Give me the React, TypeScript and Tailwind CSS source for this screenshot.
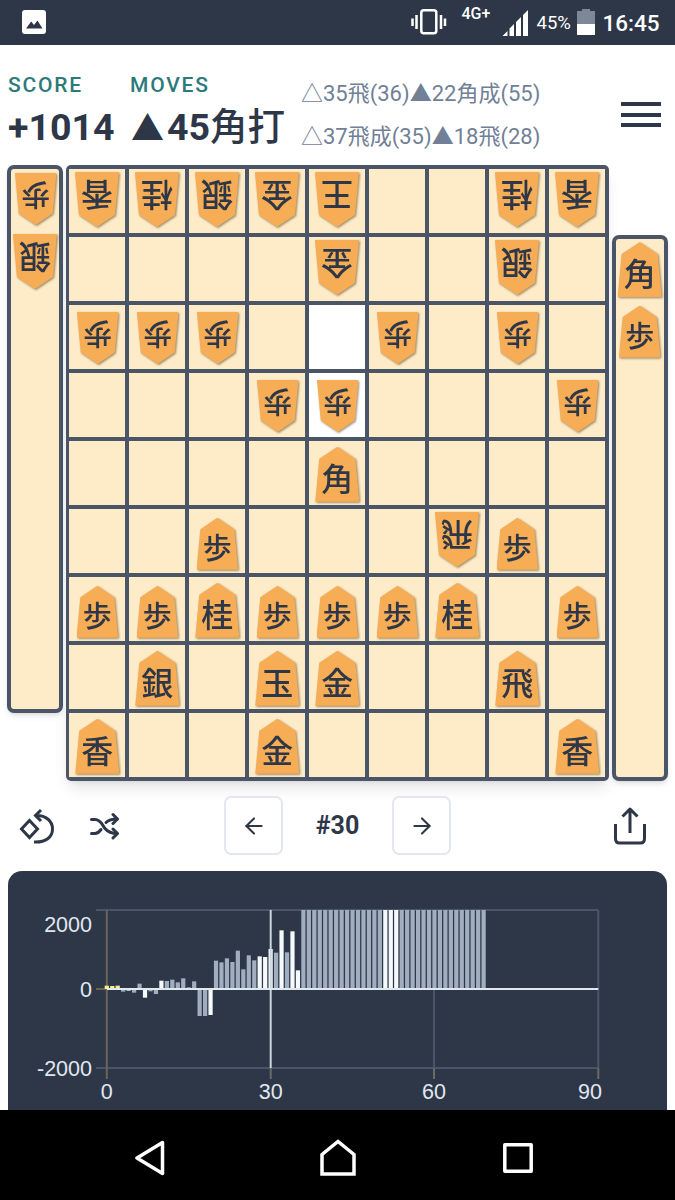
import React from "react";
import { ArrowLeft, ArrowRight } from "lucide-react";

type P = string;
const rows: P[][] = [
  ["香r", "桂r", "銀r", "金r", "王r", "", "", "桂r", "香r"],
  ["", "", "", "", "金r", "", "", "銀r", ""],
  ["歩r", "歩r", "歩r", "", "", "歩r", "", "歩r", ""],
  ["", "", "", "歩r", "歩r", "", "", "", "歩r"],
  ["", "", "", "", "角", "", "", "", ""],
  ["", "", "歩", "", "", "", "飛r", "歩", ""],
  ["歩", "歩", "桂", "歩", "歩", "歩", "桂", "", "歩"],
  ["", "銀", "", "玉", "金", "", "", "飛", ""],
  ["香", "", "", "金", "", "", "", "", "香"],
];

function Piece({ code }: { code: string }) {
  const rotated = code.endsWith("r");
  const ch = code[0];
  const small = ch === "歩";
  return (
    <div className="drop-shadow-[1px_1px_1px_rgba(60,50,20,0.55)]">
      <div
        className={`${small ? "w-[41.5px] h-[52px] text-[29px]" : "w-[44px] h-[55px] text-[32px]"} ${rotated ? "rotate-180" : ""} bg-[#f6ad55] text-[#2d3748] font-medium flex items-center justify-center pt-[5px] leading-none [clip-path:polygon(50%_0,91%_22%,100%_100%,0_100%,9%_22%)]`}
      >
        {ch}
      </div>
    </div>
  );
}

function Cell({ code, white }: { code: string; white: boolean }) {
  const rotated = code.endsWith("r");
  const small = code[0] === "歩";
  return (
    <div
      className={`${white ? "bg-white" : "bg-[#feebc8]"} flex justify-center ${
        code === "" ? "" : rotated ? (small ? "items-start pt-[7px]" : "items-start pt-[3.5px]") : "items-end pb-[3px]"
      }`}
    >
      {code && <Piece code={code} />}
    </div>
  );
}

function StandCell({ code }: { code: string }) {
  const rotated = code.endsWith("r");
  return (
    <div className={`h-[60.5px] flex justify-center ${rotated ? "items-start pt-[4px]" : "items-end pb-[2px]"}`}>
      <Piece code={code} />
    </div>
  );
}

type Bar = [number, string];
const S = "#a0aec0";
const W = "#f7fafc";
const Y = "#faf089";
const early: Bar[] = [
  [10, Y], [9, Y], [10, Y], [-8, S], [-5, W], [-11, S], [16, S], [-26, W], [-7, S], [-15, S],
  [25, W], [24, S], [28, S], [20, S], [32, S], [5, S], [23, S], [-81, S], [-81, S], [-78, W],
  [85, S], [80, S], [92, S], [81, S], [115, S], [59, S], [101, S], [86, S], [98, W], [96, W],
  [120, W], [109, S], [176, W], [110, S], [173, W], [56, W],
];
const bars: Bar[] = [...early];
for (let i = 36; i <= 69; i++) bars.push([237, i >= 51 && i <= 53 ? W : S]);
const xOf = (i: number) => 106.8 + (i * (598.3 - 106.8)) / 90;

function Chart() {
  return (
    <svg viewBox="8 871 659 239" className="block w-[659px] h-[239px]">
      <g fill="none" strokeWidth="2">
        <path d="M96 910H598.3M96 1068H598.3" stroke="#4a5568" />
        <path d="M434 989V1068M598.3 910V1068" stroke="#4a5568" />
        <path d="M434 1068V1079M598.3 1068V1079M270.7 1068V1079" stroke="#6b6b66" />
        <path d="M106.8 910V1079M96 989H107" stroke="#6b6558" />
      </g>
      {bars.map(([v, c], i) => {
        const h = Math.abs(v) / 3;
        return <rect key={i} x={xOf(i) - 2.1} y={v >= 0 ? 989 - h : 989} width="4.2" height={h} fill={c} />;
      })}
      <path d="M270.7 910V1068" stroke="#cbd5e0" strokeWidth="2" />
      <path d="M107 989H598.3" stroke="#e2e8f0" strokeWidth="2" />
      <g fill="#e2e8f0" fontSize="21.5" className="font-['Liberation_Sans']">
        <text x="92" y="931.5" textAnchor="end">2000</text>
        <text x="92" y="997" textAnchor="end">0</text>
        <text x="92" y="1076" textAnchor="end">-2000</text>
        <text x="106.8" y="1099" textAnchor="middle">0</text>
        <text x="270.7" y="1099" textAnchor="middle">30</text>
        <text x="434" y="1099" textAnchor="middle">60</text>
        <text x="590" y="1099" textAnchor="middle">90</text>
      </g>
    </svg>
  );
}

function StatusBar() {
  return (
    <div className="h-[45px] bg-[#2d3748] flex items-center text-white shrink-0 font-['Roboto']">
      <svg viewBox="0 0 24 24" className="w-[24px] h-[24px] ml-[22px] -mt-[2px]">
        <rect x="0" y="0" width="24" height="24" rx="3" fill="#fff" />
        <path d="M4 18.5 9.2 11.5 12 15 15.5 10.5 20.5 18.5Z" fill="#2d3748" />
      </svg>
      <svg viewBox="0 0 36 26" className="w-[36px] h-[26px] ml-[365px] -mt-[1px]">
        <rect x="10.3" y="1.3" width="15" height="23" rx="2.5" fill="none" stroke="#fff" strokeWidth="2.5" />
        <path d="M1.5 9.5V17M5.5 6V20M30 6V20M34 9.5V17" stroke="#fff" strokeWidth="2.5" fill="none" />
      </svg>
      <span className="ml-[14.5px] text-[16px] font-medium leading-none -mt-[17px] w-[31px]">4G+</span>
      <svg viewBox="0 0 26 26" className="w-[26px] h-[26px] ml-[9px] mt-[1px]">
        <path d="M26 0V26H21V5ZM19 7V26H14V12ZM12 14V26H7.5V18.5ZM5.5 21V26H0.5Z" fill="#fff" />
      </svg>
      <span className="ml-[9px] text-[18.5px] leading-none mt-[1px] w-[35px]">45%</span>
      <svg viewBox="0 0 18 26" className="w-[18px] h-[26px] ml-[5px] -mt-[2px]">
        <path d="M5 0H13V2H18V15H0V2H5Z" fill="#7d8798" />
        <path d="M0 15H18V26H0Z" fill="#fff" />
      </svg>
      <span className="ml-[8px] text-[22.5px] font-medium leading-none mt-[1px]">16:45</span>
    </div>
  );
}

function Header() {
  const cjk = "font-['Roboto','Noto_Sans_CJK_JP',sans-serif]";
  return (
    <div className={`h-[120px] shrink-0 flex pl-[8px] ${cjk}`}>
      <div className="w-[122px] pt-[27px]">
        <div className="text-[21px] font-medium leading-[26px] tracking-[1.8px] text-[#2c7a7b]">SCORE</div>
        <div className="text-[37.5px] font-bold leading-[44px] mt-[7px] text-[#2d3748]">+1014</div>
      </div>
      <div className="w-[171px] pt-[27px]">
        <div className="text-[21px] font-medium leading-[26px] tracking-[1.8px] text-[#2c7a7b]">MOVES</div>
        <div className="text-[37.5px] font-bold leading-[44px] mt-[7px] text-[#2d3748] whitespace-nowrap">
          <span className="text-[33px] ml-[1px] mr-[3px]">▲</span>45<span className="font-medium">角打</span>
        </div>
      </div>
      <div className="w-[320px] pt-[35px] text-[22px] leading-[28px] text-[#718096] whitespace-nowrap">
        <div>△35飛(36)▲22角成(55)</div>
        <div className="mt-[15px]">△37飛成(35)▲18飛(28)</div>
      </div>
      <div className="flex flex-col gap-[6.5px] w-[40px] pt-[57px]">
        <div className="h-[4px] bg-[#2d3748]" />
        <div className="h-[4px] bg-[#2d3748]" />
        <div className="h-[4px] bg-[#2d3748]" />
      </div>
    </div>
  );
}

function Board() {
  return (
    <div className="flex pl-[7.3px] h-[615.5px] shrink-0 font-['Noto_Sans_CJK_JP',sans-serif]">
      <div className="w-[56px] h-[548px] self-start border-[4px] border-[#4a5568] rounded-[7px] bg-[#feebc8] shadow-md">
        <StandCell code="歩r" />
        <StandCell code="銀r" />
      </div>
      <div className="w-[543.5px] h-[615.5px] ml-[2.3px] grid grid-cols-[repeat(9,56px)] grid-rows-[repeat(9,64px)] gap-[4px] p-[3.75px] bg-[#4a5568] rounded-[5px] shadow-lg">
        {rows.flatMap((r, y) =>
          r.map((c, x) => <Cell key={`${y}-${x}`} code={c} white={x === 4 && (y === 2 || y === 3)} />)
        )}
      </div>
      <div className="w-[56px] h-[546px] self-end ml-[2.6px] border-[4px] border-[#4a5568] rounded-[7px] bg-[#feebc8] shadow-md">
        <StandCell code="角" />
        <StandCell code="歩" />
      </div>
    </div>
  );
}

function Controls() {
  return (
    <div className="h-[90.5px] shrink-0 flex items-center pl-[18px] text-[#2d3748]">
      <svg viewBox="18 806 38 38" className="w-[38px] h-[38px]" fill="none" stroke="#2d3748" strokeWidth="3">
        <path d="M29.5 819.5 37.5 828 29.5 836.5 21.5 828Z" strokeLinejoin="miter" />
        <path d="M38 814.5H36.5C46 814.5 52.5 820 52.5 828C52.5 836 46 841.5 34 841" />
        <path d="M41 809 35.5 814.5 41 820" strokeLinejoin="miter" />
      </svg>
      <svg viewBox="0 0 30 28" className="w-[30px] h-[28px] ml-[34px]" fill="none" stroke="#2d3748" strokeWidth="3" strokeLinecap="round" strokeLinejoin="round">
        <path d="M1.5 7.5H5C11 7.5 12 13 15 16.5C18 20 21 21.5 27 21.5" />
        <path d="M1.5 21.5H5C8 21.5 9.5 19.5 11 17.5M16 10.5C18 8.5 21 7 27 7" />
        <path d="M23 2.5 27.5 7 23 11.5M23 17 27.5 21.5 23 26" />
      </svg>
      <button className="w-[59px] h-[59px] ml-[104px] border-2 border-[#e2e8f0] rounded-[7px] flex items-center justify-center">
        <ArrowLeft size={26} strokeWidth={1.9} color="#2d3748" />
      </button>
      <div className="w-[109px] text-center text-[25px] font-bold font-['Roboto'] leading-none">#30</div>
      <button className="w-[59px] h-[59px] border-2 border-[#e2e8f0] rounded-[7px] flex items-center justify-center">
        <ArrowRight size={26} strokeWidth={1.9} color="#2d3748" />
      </button>
      <svg viewBox="612 805 36 41" className="w-[36px] h-[41px] ml-[161px]" fill="none" stroke="#2d3748" strokeWidth="3" strokeLinejoin="round">
        <path d="M615.5 824V838.5C615.5 841.5 617 843 619.5 843H640.5C643 843 644.5 841.5 644.5 838.5V824" />
        <path d="M630 809V833M622.5 816.5 630 809 637.5 816.5" />
      </svg>
    </div>
  );
}

function Nav() {
  return (
    <div className="h-[90px] shrink-0 bg-black flex items-center pl-[135px] pt-[5px]">
      <svg viewBox="0 0 30 36" className="w-[30px] h-[36px]" fill="none" stroke="#fff" strokeWidth="3.5" strokeLinejoin="round">
        <path d="M27.5 2.5V33.5L2 18Z" />
      </svg>
      <svg viewBox="0 0 36 37" className="w-[36px] h-[37px] ml-[155px]" fill="none" stroke="#fff" strokeWidth="3.5" strokeLinejoin="miter">
        <path d="M2 35V15.5L18 2.5 34 15.5V35Z" />
      </svg>
      <svg viewBox="0 0 30 30" className="w-[30px] h-[30px] ml-[147px]" fill="none" stroke="#fff" strokeWidth="3.5" strokeLinejoin="round">
        <rect x="1.8" y="1.8" width="26.4" height="26.4" />
      </svg>
    </div>
  );
}

export default function App() {
  return (
    <div className="w-[675px] h-[1200px] overflow-hidden flex flex-col bg-white">
      <StatusBar />
      <Header />
      <Board />
      <Controls />
      <div className="h-[239px] shrink-0 mx-[8px] bg-[#2d3748] rounded-t-[14px]">
        <Chart />
      </div>
      <Nav />
    </div>
  );
}
